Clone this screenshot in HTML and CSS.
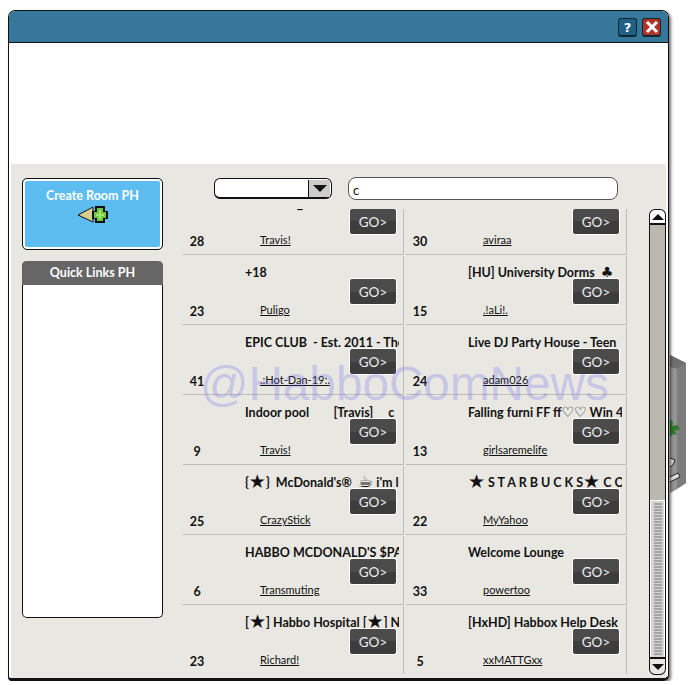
FILE: index.html
```html
<!doctype html>
<html lang="en">

<head>
  <meta charset="UTF-8">
  <title>Navigator</title>
  <link rel="stylesheet" href="styles.css">
</head>

<body>
  <svg class="room" width="20" height="150" viewBox="0 0 20 150">
    <polygon points="0,0 16,8 16,128 0,138" fill="#8b8b8b" />
    <polygon points="0,0 16,8 7,14 0,12" fill="#6f6f6f" />
    <polygon points="7,14 16,8 16,128 7,134" fill="#7c7c7c" />
    <polygon points="0,12 7,14 7,134 0,138" fill="#949494" />
    <path d="M0 64l3 3-1 4 5-1 3 4-5 2 2 4-4-1-3 3z" fill="#2f7a2b" />
    <path d="M0 103l5 2-2 5-3 2M0 122l8-4 2 4-10 5" fill="#ddd" stroke="#222" />
  </svg>

  <div class="window">
    <header class="titlebar">
      <button class="tool help">?</button>
      <button class="tool close">
        <svg width="14" height="14" viewBox="0 0 14 14">
          <path d="M2 2l10 10M12 2L2 12" stroke="#fff" stroke-width="3" />
        </svg>
      </button>
    </header>
    <div class="banner"></div>
    <div class="panel">
      <aside class="side">
        <div class="create">
          <span>Create Room PH</span>
          <svg width="32" height="18" viewBox="0 0 32 18">
            <path d="M1 10L16 2v15z" fill="#d6cf8e" stroke="#111" />
            <rect x="18" y="1" width="10" height="17" fill="#111" />
            <rect x="15" y="6" width="16" height="8" fill="#111" />
            <rect x="20" y="3" width="6" height="13" fill="#6cc83c" />
            <rect x="17" y="7" width="12" height="6" fill="#6cc83c" />
            <rect x="22" y="5" width="2" height="9" fill="#a4e66c" />
            <rect x="19" y="9" width="8" height="2" fill="#a4e66c" />
          </svg>
        </div>
        <div class="links">
          <h2>Quick Links PH</h2>
        </div>
      </aside>

      <main class="main">
        <div class="filters">
          <div class="select"><span class="select-arrow"></span></div>
          <div class="search">c</div>
        </div>
        <div class="browser">
          <div class="list">
            <div class="rooms">
              <div class="room-cell">
                <p class="title">                 <span class="clipped">_</span></p>
                <div class="meta"><b>28</b><a href="#">Travis!</a></div>
                <button class="go">GO&gt;</button>
              </div>
              <div class="room-cell">
                <p class="title"></p>
                <div class="meta"><b>30</b><a href="#">aviraa</a></div>
                <button class="go">GO&gt;</button>
              </div>
              <div class="room-cell">
                <p class="title">+18</p>
                <div class="meta"><b>23</b><a href="#">Puligo</a></div>
                <button class="go">GO&gt;</button>
              </div>
              <div class="room-cell">
                <p class="title">[HU] University Dorms  <span class="heart">♣</span></p>
                <div class="meta"><b>15</b><a href="#">.!aLi!.</a></div>
                <button class="go">GO&gt;</button>
              </div>
              <div class="room-cell">
                <p class="title">EPIC CLUB  - Est. 2011 - The Best</p>
                <div class="meta"><b>41</b><a href="#">.:Hot-Dan-19:.</a></div>
                <button class="go">GO&gt;</button>
              </div>
              <div class="room-cell">
                <p class="title">Live DJ Party House - Teen</p>
                <div class="meta"><b>24</b><a href="#">adam026</a></div>
                <button class="go">GO&gt;</button>
              </div>
              <div class="room-cell">
                <p class="title">Indoor pool        [Travis]     c</p>
                <div class="meta"><b>9</b><a href="#">Travis!</a></div>
                <button class="go">GO&gt;</button>
              </div>
              <div class="room-cell">
                <p class="title">Falling furni FF ff<span class="heart">♡♡</span> Win 4</p>
                <div class="meta"><b>13</b><a href="#">girlsaremelife</a></div>
                <button class="go">GO&gt;</button>
              </div>
              <div class="room-cell">
                <p class="title">{<span class="star">★</span>}  McDonald's®  <span class="cup">☕</span> i'm lovin</p>
                <div class="meta"><b>25</b><a href="#">CrazyStick</a></div>
                <button class="go">GO&gt;</button>
              </div>
              <div class="room-cell">
                <p class="title"><span class="star">★</span> S T A R B U C K S<span class="star">★</span> C O F</p>
                <div class="meta"><b>22</b><a href="#">MyYahoo</a></div>
                <button class="go">GO&gt;</button>
              </div>
              <div class="room-cell">
                <p class="title">HABBO MCDONALD'S $PAY</p>
                <div class="meta"><b>6</b><a href="#">Transmuting</a></div>
                <button class="go">GO&gt;</button>
              </div>
              <div class="room-cell">
                <p class="title">Welcome Lounge</p>
                <div class="meta"><b>33</b><a href="#">powertoo</a></div>
                <button class="go">GO&gt;</button>
              </div>
              <div class="room-cell">
                <p class="title">[<span class="star">★</span>] Habbo Hospital [<span class="star">★</span>] Nest</p>
                <div class="meta"><b>23</b><a href="#">Richard!</a></div>
                <button class="go">GO&gt;</button>
              </div>
              <div class="room-cell">
                <p class="title">[HxHD] Habbox Help Desk</p>
                <div class="meta"><b>5</b><a href="#">xxMATTGxx</a></div>
                <button class="go">GO&gt;</button>
              </div>
            </div>
          </div>
          <div class="scrollbar">
            <div class="scroll-btn up"></div>
            <div class="track"></div>
            <div class="thumb"></div>
            <div class="scroll-btn down"></div>
          </div>
        </div>
      </main>
    </div>
  </div>

  <div class="watermark">@HabboComNews</div>
</body>

</html>
```

FILE: styles.css
```css
body {
  margin: 0;
  background: #fff;
  font-family: Lato, "DejaVu Sans", sans-serif;
  color: #111;
}

/* room scenery peeking out behind the window */
.room {
  position: absolute;
  left: 670px;
  top: 355px;
}

.window {
  position: relative;
  box-sizing: border-box;
  width: 661px;
  height: 671px;
  margin: 10px 0 0 8px;
  display: flex;
  flex-direction: column;
  background: #fff;
  border: solid #111;
  border-width: 1px 1px 3px 1px;
  border-radius: 7px 7px 6px 4px;
  box-shadow: 2px 2px 3px rgba(0, 0, 0, .55);
}

.titlebar {
  flex: none;
  box-sizing: border-box;
  height: 32px;
  padding: 7px 7px 0 0;
  display: flex;
  justify-content: flex-end;
  gap: 5px;
  background: #37789a;
  border-bottom: 1px solid #111;
  border-radius: 6px 6px 0 0;
}

.tool {
  box-sizing: border-box;
  width: 19px;
  height: 19px;
  padding: 0;
  display: flex;
  align-items: center;
  justify-content: center;
  border: 1px solid #0f2633;
  border-bottom-width: 2px;
  border-radius: 3px;
  color: #fff;
  font: 700 13px "DejaVu Sans", sans-serif;
}

.help {
  background: #215f86;
}

.close {
  background: #b0332a;
}

.banner {
  flex: none;
  height: 121px;
}

.panel {
  flex: 1;
  margin: 0 2px 0 2px;
  padding: 14px 0 0 11px;
  display: flex;
  background: #e8e7e1;
}

.side {
  flex: none;
  width: 141px;
  display: flex;
  flex-direction: column;
  gap: 11px;
}

.create {
  box-sizing: border-box;
  height: 72px;
  padding-top: 8px;
  display: flex;
  flex-direction: column;
  align-items: center;
  gap: 1px;
  background: #5dbcf0;
  border: 1px solid #111;
  border-radius: 5px;
  box-shadow: inset 0 0 0 2px #fff;
  color: #fff;
  font-size: 12.5px;
  font-weight: 700;
  line-height: 17px;
}

.links {
  box-sizing: border-box;
  height: 357px;
  background: #fff;
  border: 1px solid #111;
  border-top: 0;
  border-radius: 5px;
}

.links h2 {
  margin: 0 -1px;
  height: 24px;
  background: #666;
  border-radius: 5px 5px 0 0;
  color: #fff;
  font-size: 12.5px;
  font-weight: 700;
  line-height: 24px;
  text-align: center;
}

.main {
  flex: none;
  width: 483px;
  margin-left: 20px;
}

.filters {
  height: 31px;
  padding-left: 31px;
  display: flex;
  gap: 16px;
}

.select {
  box-sizing: border-box;
  width: 118px;
  height: 21px;
  background: #fff;
  border: 1px solid #111;
  border-bottom-width: 2px;
  border-radius: 6px;
  display: flex;
  justify-content: flex-end;
  padding: 1px 1px 0 0;
}

.select-arrow {
  width: 21px;
  height: 17px;
  background: #ccc;
  border-left: 1px solid #111;
  display: flex;
  align-items: center;
  justify-content: center;
}

.select-arrow::after {
  content: "";
  border: solid transparent;
  border-width: 7px 7px 0;
  border-top-color: #111;
}

.search {
  box-sizing: border-box;
  width: 270px;
  height: 23px;
  margin-top: -1px;
  padding-left: 4px;
  background: #fff;
  border: 1px solid #555;
  border-radius: 8px;
  font-size: 13px;
  line-height: 24px;
}

.browser {
  display: flex;
  gap: 21px;
}

.list {
  width: 445px;
  height: 465px;
  overflow: hidden;
}

.rooms {
  margin-top: -23px;
  display: grid;
  grid-template-columns: 221px 221px;
  column-gap: 2px;
  row-gap: 1px;
}

.room-cell {
  position: relative;
  box-sizing: border-box;
  height: 69px;
  padding-top: 8px;
  border-right: 1px solid #bdbcb5;
  border-bottom: 1px solid #bdbcb5;
}

.title {
  margin: 0 4px 0 62px;
  height: 18px;
  overflow: hidden;
  white-space: pre;
  font-size: 12.5px;
  font-weight: 700;
  line-height: 18px;
}

.star {
  font-family: "DejaVu Sans", sans-serif;
  font-size: 19px;
  line-height: 14px;
  font-weight: 400;
  vertical-align: -1px;
}

.cup {
  font-family: "DejaVu Sans", sans-serif;
  font-size: 17px;
  line-height: 14px;
  font-weight: 400;
}

.heart {
  font-family: "DejaVu Sans", sans-serif;
  font-size: 14px;
  line-height: 14px;
  font-weight: 700;
}

.clipped {
  font-size: 14px;
}

.meta {
  margin-top: 21px;
  display: flex;
  align-items: flex-end;
  font-size: 11px;
  line-height: 14px;
}

.meta b {
  flex: none;
  width: 28px;
  margin-bottom: 1px;
  font-size: 12.5px;
  text-align: center;
}

.meta a {
  margin: 0 0 3px 49px;
  color: #111;
}

.go {
  position: absolute;
  left: 166px;
  top: 22px;
  box-sizing: border-box;
  width: 48px;
  height: 27px;
  padding: 0;
  background: linear-gradient(#4b4b4b 50%, #3d3d3d 50%);
  border: 1px solid #fff;
  border-radius: 3px;
  color: #eee;
  font: 400 13.5px Lato, sans-serif;
}

.scrollbar {
  flex: none;
  width: 17px;
  height: 466px;
  display: flex;
  flex-direction: column;
}

.scroll-btn {
  box-sizing: border-box;
  flex: none;
  height: 16px;
  display: flex;
  align-items: center;
  justify-content: center;
  background: #fff;
  border: 1px solid #111;
}

.up {
  border-bottom-width: 2px;
  border-radius: 6px 6px 0 0;
}

.up::after {
  content: "";
  border: solid transparent;
  border-width: 0 6px 6px;
  border-bottom-color: #111;
}

.down {
  height: 18px;
  border-top-width: 2px;
  border-radius: 0 0 6px 6px;
  background: #e8e7e1;
}

.down::after {
  content: "";
  border: solid transparent;
  border-width: 6px 6px 0;
  border-top-color: #111;
}

.track {
  flex: none;
  height: 275px;
  background: #bbb8b0;
  border: solid #111;
  border-width: 0 1px;
}

.thumb {
  flex: 1;
  background:
    repeating-linear-gradient(#a5a5a5 0 2px, #d4d4d4 2px 3px) 4px 3px / 8px 152px no-repeat,
    #d4d4d4;
  border: solid #111;
  border-width: 0 1px;
  box-shadow: inset 0 1px 0 #fff, inset 1px 0 0 #fff, inset -1px 0 0 #fff;
}

.watermark {
  position: absolute;
  left: 200px;
  top: 356px;
  color: rgba(100, 100, 240, .27);
  font: 400 47.7px "Liberation Sans", sans-serif;
  pointer-events: none;
}
```
